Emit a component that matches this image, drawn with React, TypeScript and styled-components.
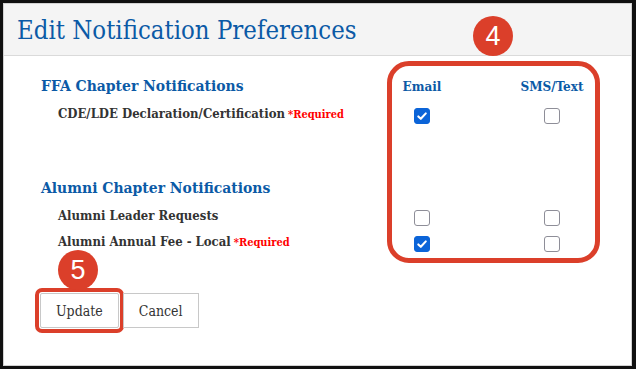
import React from "react";
import styled, { createGlobalStyle, css } from "styled-components";

const GlobalStyle = createGlobalStyle`
  html, body {
    margin: 0;
    padding: 0;
    background: #fff;
  }
  body {
    font-family: "DejaVu Serif Condensed", "DejaVu Serif", serif;
  }
`;

const SLAB = `"DejaVu Serif Condensed", "DejaVu Serif", serif`;
const RED = "#db3f2a";
const BLUE = "#0b5aa6";

type Item = { label: string; required?: boolean; email: boolean; sms: boolean };
type Section = { title: string; items: Item[] };

const sections: Section[] = [
  {
    title: "FFA Chapter Notifications",
    items: [{ label: "CDE/LDE Declaration/Certification", required: true, email: true, sms: false }],
  },
  {
    title: "Alumni Chapter Notifications",
    items: [
      { label: "Alumni Leader Requests", email: false, sms: false },
      { label: "Alumni Annual Fee - Local", required: true, email: true, sms: false },
    ],
  },
];

const Checkbox = ({ checked }: { checked: boolean }) => (
  <Box $checked={checked}>
    {checked && (
      <svg width="12" height="12" viewBox="0 0 12 12">
        <path d="M2.3 6.4 L4.8 8.8 L9.8 3.4" fill="none" stroke="#fff" strokeWidth="2.1" strokeLinecap="round" strokeLinejoin="round" />
      </svg>
    )}
  </Box>
);

const App = (): JSX.Element => (
  <>
    <GlobalStyle />
    <Frame>
      <Modal>
        <Header>
          <Title>Edit Notification Preferences</Title>
        </Header>
        <Body>
          {sections.map((section, si) => (
            <SectionBlock key={section.title} $first={si === 0}>
              <Row $heading>
                <SectionTitle>{section.title}</SectionTitle>
                <Cell>{si === 0 && <ColumnLabel>Email</ColumnLabel>}</Cell>
                <Cell $inset={50}>{si === 0 && <ColumnLabel>SMS/Text</ColumnLabel>}</Cell>
              </Row>
              {section.items.map((item) => (
                <Row key={item.label}>
                  <ItemLabel>
                    {item.label}
                    {item.required && <Required>*Required</Required>}
                  </ItemLabel>
                  <Cell>
                    <Checkbox checked={item.email} />
                  </Cell>
                  <Cell $inset={50}>
                    <Checkbox checked={item.sms} />
                  </Cell>
                </Row>
              ))}
            </SectionBlock>
          ))}
          <Actions>
            <Button $highlighted>Update</Button>
            <Button>Cancel</Button>
          </Actions>
        </Body>
      </Modal>
      <ColumnsHighlight />
      <StepBadge $left={470} $top={13}>4</StepBadge>
      <StepBadge $left={55} $top={247}>5</StepBadge>
    </Frame>
  </>
);

export default App;

const Frame = styled.div`
  position: relative;
  width: 636px;
  height: 369px;
  box-sizing: border-box;
  border: 3px solid #101010;
  border-right-width: 4px;
  background: #fff;
`;

const Modal = styled.div`
  height: 100%;
  box-sizing: border-box;
  border: 1px solid #d2d2d2;
  display: flex;
  flex-direction: column;
`;

const Header = styled.header`
  height: 52px;
  box-sizing: border-box;
  background: #f4f4f4;
  border-bottom: 1px solid #dadada;
  display: flex;
  align-items: center;
  padding-left: 13px;
`;

const Title = styled.h1`
  margin: 0;
  font-family: ${SLAB};
  font-weight: 400;
  font-size: 25.5px;
  color: ${BLUE};
`;

const Body = styled.main`
  padding: 17px 39px 0 37px;
`;

const SectionBlock = styled.section<{ $first?: boolean }>`
  display: flex;
  flex-direction: column;
  margin-top: ${(p) => (p.$first ? 0 : 46)}px;
`;

const Row = styled.div<{ $heading?: boolean }>`
  display: grid;
  grid-template-columns: 1fr 80px 130px;
  align-items: center;
  height: 26px;
  margin-bottom: ${(p) => (p.$heading ? 4 : 0)}px;
`;

const SectionTitle = styled.h2`
  margin: 0;
  padding-bottom: 2px;
  font-family: ${SLAB};
  font-size: 15.5px;
  font-weight: 700;
  color: ${BLUE};
`;

const ColumnLabel = styled.span`
  font-family: ${SLAB};
  font-size: 13.4px;
  font-weight: 700;
  color: ${BLUE};
  white-space: nowrap;
`;

const ItemLabel = styled.div`
  padding-left: 17px;
  padding-bottom: 5px;
  font-family: ${SLAB};
  font-size: 13px;
  font-weight: 700;
  color: #333;
  white-space: nowrap;
`;

const Required = styled.span`
  margin-left: 3px;
  font-size: 11px;
  font-weight: 700;
  color: #f00;
`;

const Cell = styled.div<{ $inset?: number }>`
  display: flex;
  justify-content: center;
  padding-left: ${(p) => p.$inset ?? 0}px;
`;

const Box = styled.span<{ $checked: boolean }>`
  width: 16px;
  height: 16px;
  box-sizing: border-box;
  border-radius: 3px;
  display: flex;
  align-items: center;
  justify-content: center;
  ${(p) =>
    p.$checked
      ? css`
          background: #0b64d8;
          border: 1px solid #0b64d8;
        `
      : css`
          background: #fff;
          border: 1px solid #8e8e98;
        `}
`;

const Actions = styled.div`
  display: flex;
  gap: 4px;
  margin-top: 36px;
  margin-left: -1px;
`;

const Button = styled.button<{ $highlighted?: boolean }>`
  height: 35px;
  padding: 0 15px;
  background: #fff;
  border: 1px solid #c8c8c8;
  font-family: ${SLAB};
  font-size: 14px;
  color: #333;
  ${(p) =>
    p.$highlighted &&
    css`
      outline: 4px solid ${RED};
      outline-offset: 1px;
      border-radius: 2px;
    `}
`;

const ColumnsHighlight = styled.div`
  position: absolute;
  left: 384px;
  top: 58px;
  width: 213px;
  height: 202px;
  box-sizing: border-box;
  border: 5px solid ${RED};
  border-radius: 22px;
  pointer-events: none;
`;

const StepBadge = styled.div<{ $left: number; $top: number }>`
  position: absolute;
  left: ${(p) => p.$left}px;
  top: ${(p) => p.$top}px;
  width: 40px;
  height: 40px;
  border-radius: 50%;
  background: ${RED};
  color: #fff;
  display: flex;
  align-items: center;
  justify-content: center;
  font-family: "Liberation Sans", Arial, sans-serif;
  font-size: 27px;
  line-height: 1;
`;
